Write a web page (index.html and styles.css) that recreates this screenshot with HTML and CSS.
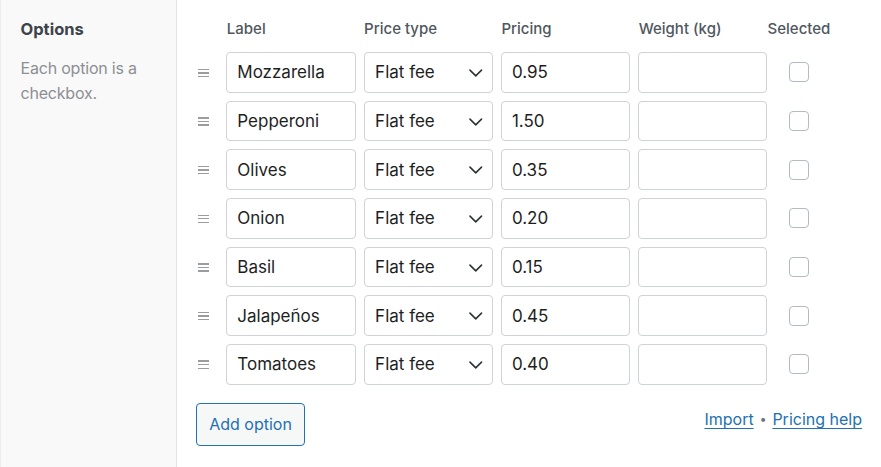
FILE: index.html
```html
<!DOCTYPE html>
<html lang="en">
<head>
<meta charset="utf-8">
<title>Options</title>
<link rel="stylesheet" href="styles.css">
</head>
<body>
<div class="page">
  <aside class="side">
    <h2 class="side-title">Options</h2>
    <p class="side-desc">Each option is a checkbox.</p>
  </aside>
  <main class="main">
    <div class="grid">
      <div class="hcell"></div>
      <div class="hcell">Label</div>
      <div class="hcell">Price type</div>
      <div class="hcell">Pricing</div>
      <div class="hcell">Weight (kg)</div>
      <div class="hcell hcenter"><span>Selected</span></div>

      <div class="handle"><span></span><span></span><span></span></div>
      <input class="field" type="text" value="Mozzarella">
      <div class="selwrap"><select class="field sel"><option>Flat fee</option></select><svg class="chev" viewBox="0 0 14 8"><path d="M1 1l6 6 6-6"/></svg></div>
      <input class="field" type="text" value="0.95">
      <input class="field" type="text" value="">
      <div class="cbcell"><input class="cb" type="checkbox"></div>

      <div class="handle"><span></span><span></span><span></span></div>
      <input class="field" type="text" value="Pepperoni">
      <div class="selwrap"><select class="field sel"><option>Flat fee</option></select><svg class="chev" viewBox="0 0 14 8"><path d="M1 1l6 6 6-6"/></svg></div>
      <input class="field" type="text" value="1.50">
      <input class="field" type="text" value="">
      <div class="cbcell"><input class="cb" type="checkbox"></div>

      <div class="handle"><span></span><span></span><span></span></div>
      <input class="field" type="text" value="Olives">
      <div class="selwrap"><select class="field sel"><option>Flat fee</option></select><svg class="chev" viewBox="0 0 14 8"><path d="M1 1l6 6 6-6"/></svg></div>
      <input class="field" type="text" value="0.35">
      <input class="field" type="text" value="">
      <div class="cbcell"><input class="cb" type="checkbox"></div>

      <div class="handle"><span></span><span></span><span></span></div>
      <input class="field" type="text" value="Onion">
      <div class="selwrap"><select class="field sel"><option>Flat fee</option></select><svg class="chev" viewBox="0 0 14 8"><path d="M1 1l6 6 6-6"/></svg></div>
      <input class="field" type="text" value="0.20">
      <input class="field" type="text" value="">
      <div class="cbcell"><input class="cb" type="checkbox"></div>

      <div class="handle"><span></span><span></span><span></span></div>
      <input class="field" type="text" value="Basil">
      <div class="selwrap"><select class="field sel"><option>Flat fee</option></select><svg class="chev" viewBox="0 0 14 8"><path d="M1 1l6 6 6-6"/></svg></div>
      <input class="field" type="text" value="0.15">
      <input class="field" type="text" value="">
      <div class="cbcell"><input class="cb" type="checkbox"></div>

      <div class="handle"><span></span><span></span><span></span></div>
      <input class="field" type="text" value="Jalapeños">
      <div class="selwrap"><select class="field sel"><option>Flat fee</option></select><svg class="chev" viewBox="0 0 14 8"><path d="M1 1l6 6 6-6"/></svg></div>
      <input class="field" type="text" value="0.45">
      <input class="field" type="text" value="">
      <div class="cbcell"><input class="cb" type="checkbox"></div>

      <div class="handle"><span></span><span></span><span></span></div>
      <input class="field" type="text" value="Tomatoes">
      <div class="selwrap"><select class="field sel"><option>Flat fee</option></select><svg class="chev" viewBox="0 0 14 8"><path d="M1 1l6 6 6-6"/></svg></div>
      <input class="field" type="text" value="0.40">
      <input class="field" type="text" value="">
      <div class="cbcell"><input class="cb" type="checkbox"></div>
    </div>
    <div class="footer">
      <button class="add-btn" type="button">Add option</button>
      <div class="links">
        <a class="link" href="#">Import</a>
        <span class="dot">•</span>
        <a class="link" href="#">Pricing help</a>
      </div>
    </div>
  </main>
</div>
</body>
</html>
```

FILE: styles.css
```css
* { box-sizing: border-box; }
html, body { margin: 0; padding: 0; background: #ffffff; }
body {
  font-family: Inter, "Noto Sans", "Liberation Sans", sans-serif;
  color: #1e1e1e;
}
.page {
  display: flex;
  height: 467px;
  overflow: hidden;
}
.side {
  width: 177px;
  flex: 0 0 177px;
  background: #f9f9f9;
  border-left: 1px solid #ececec;
  border-right: 1px solid #e2e3e5;
  padding: 17.3px 19px 0 19.5px;
}
.side-title {
  margin: 0;
  font-size: 16.5px;
  line-height: 24px;
  font-weight: 700;
  color: #3c434a;
}
.side-desc {
  margin: 14.8px 0 0;
  font-size: 16px;
  letter-spacing: -0.2px;
  line-height: 25px;
  color: #8c8f94;
}
.main {
  flex: 1;
  padding: 19px 19px 0 21.3px;
}
.grid {
  display: grid;
  grid-template-columns: 20px repeat(4, 129.3px) 47px;
  column-gap: 8px;
  row-gap: 8px;
  align-items: center;
}
.hcell {
  font-size: 15px;
  line-height: 20px;
  font-weight: 500;
  color: #50575e;
  padding-bottom: 5px;
  padding-left: 0.5px;
  white-space: nowrap;
}
.hcenter {
  display: flex;
  justify-content: center;
  padding-left: 0;
}
.handle {
  display: flex;
  flex-direction: column;
  gap: 2.2px;
  width: 11px;
  padding-top: 1px;
}
.handle span {
  display: block;
  height: 1.4px;
  background: #9a9ca0;
}
.field {
  display: block;
  width: 100%;
  height: 40.67px;
  margin: 0;
  border: 1px solid #cfd2d9;
  border-radius: 4px;
  background: #ffffff;
  padding: 0 10px;
  font-family: inherit;
  font-size: 17px;
  color: #1e1e1e;
  outline: none;
}
.selwrap {
  position: relative;
}
.sel {
  appearance: none;
  -webkit-appearance: none;
  padding-left: 10.5px;
}
.chev {
  position: absolute;
  right: 10px;
  top: 17px;
  width: 13.5px;
  height: 8px;
  pointer-events: none;
}
.chev path {
  fill: none;
  stroke: #2c3338;
  stroke-width: 1.6;
  stroke-linecap: round;
  stroke-linejoin: round;
}
.cbcell {
  display: flex;
  justify-content: center;
}
.cb {
  appearance: none;
  -webkit-appearance: none;
  width: 20px;
  height: 20px;
  margin: 0 0 0 0.5px;
  border: 1px solid #b4b9c6;
  border-radius: 4px;
  background: #ffffff;
}
.footer {
  display: flex;
  justify-content: space-between;
  align-items: flex-start;
  margin-top: 18px;
  margin-left: -2.3px;
}
.add-btn {
  height: 43px;
  width: 109px;
  padding: 0;
  border: 1px solid #2271b1;
  border-radius: 4px;
  background: #f6f7f7;
  color: #2271b1;
  font-family: inherit;
  font-size: 16px;
}
.links {
  display: flex;
  align-items: center;
  margin-top: 6.5px;
  font-size: 16px;
  line-height: 20px;
}
.link {
  color: #2271b1;
  text-decoration: underline;
  text-underline-offset: 3px;
}
.dot {
  color: #6c7075;
  font-size: 12px;
  margin: 0 6px;
}
```
